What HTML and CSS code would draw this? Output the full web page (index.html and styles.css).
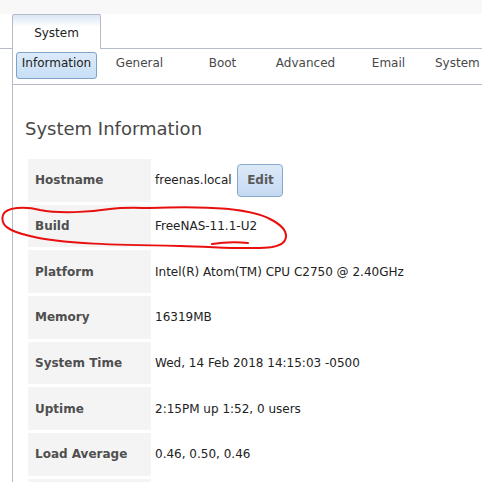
FILE: index.html
```html
<!DOCTYPE html>
<html lang="en">

<head>
    <meta charset="UTF-8">
    <meta name="viewport" content="width=device-width,initial-scale=1" />
    <title>System - Information</title>
    <link rel="stylesheet" href="styles.css">
</head>

<body>
    <div class="topstrip"></div>

    <nav class="tabbar">
        <div class="tab active">System</div>
    </nav>

    <section class="pane">
        <nav class="subtabs">
            <button class="subtab active">Information</button>
            <button class="subtab">General</button>
            <button class="subtab">Boot</button>
            <button class="subtab">Advanced</button>
            <button class="subtab">Email</button>
            <button class="subtab">System Dataset</button>
        </nav>

        <div class="content">
            <h2>System Information</h2>
            <table class="info">
                <tr>
                    <th>Hostname</th>
                    <td>freenas.local <button class="edit-button">Edit</button></td>
                </tr>
                <tr>
                    <th>Build</th>
                    <td>FreeNAS-11.1-U2</td>
                </tr>
                <tr>
                    <th>Platform</th>
                    <td>Intel(R) Atom(TM) CPU C2750 @ 2.40GHz</td>
                </tr>
                <tr>
                    <th>Memory</th>
                    <td>16319MB</td>
                </tr>
                <tr>
                    <th>System Time</th>
                    <td>Wed, 14 Feb 2018 14:15:03 -0500</td>
                </tr>
                <tr>
                    <th>Uptime</th>
                    <td>2:15PM up 1:52, 0 users</td>
                </tr>
                <tr>
                    <th>Load Average</th>
                    <td>0.46, 0.50, 0.46</td>
                </tr>
                <tr>
                    <th>Connected through</th>
                    <td>192.168.1.10</td>
                </tr>
            </table>
        </div>
    </section>

    <!-- hand-drawn red circle around the build row -->
    <svg class="markup" width="482" height="482" viewBox="0 0 482 482">
        <path d="M150 208 C200 206 250 208 270 219 C292 230 290 244 272 247 C250 250 220 247 180 246
                 C120 245 60 244 30 236 C8 231 0 225 3 215 C6 207 25 206 40 210 C60 214 90 212 110 209
                 C125 207 140 208 150 208" />
        <path d="M212 244 C225 242 238 242 248 243" />
    </svg>
</body>

</html>
```

FILE: styles.css
```css
html, body {
    margin: 0;
    overflow: hidden;
    background: white;
    font-family: "DejaVu Sans", sans-serif;
    font-size: 12px;
    color: #222;
}

.topstrip {
    height: 14px;
    background: #f8f8f8;
}

.tabbar {
    display: flex;
    padding-left: 12px;
    height: 34px;
    border-bottom: 1px solid #b5bcc7;
}

.tab {
    width: 89px;
    box-sizing: border-box;
    height: 35px;
    border: 1px solid #b5bcc7;
    border-bottom: none;
    border-radius: 2px 2px 0 0;
    background: linear-gradient(#d9e6f6, #ffffff 35%);
    text-align: center;
    line-height: 36px;
    color: #222;
}

.pane {
    margin-left: 12px;
    border-left: 1px solid #b5bcc7;
    min-height: 500px;
}

.subtabs {
    display: flex;
    gap: 2px;
    padding: 3px 3px 5px;
    border-bottom: 1px solid #b5bcc7;
    white-space: nowrap;
}

.subtab {
    flex: none;
    min-width: 81px;
    height: 27px;
    padding: 0 3px 5px;
    border: 1px solid transparent;
    border-radius: 3px;
    background: none;
    font-family: inherit;
    font-size: 12px;
    color: #484848;
}

.subtab.active {
    border-color: #7ea3c8;
    background: linear-gradient(#dceafa, #c8dff6);
    color: #222;
}

.content {
    padding: 33px 0 0 12px;
}

h2 {
    margin: 0 0 16px;
    font-size: 18px;
    line-height: 22px;
    font-weight: normal;
    color: #484848;
}

.info {
    border-spacing: 3px;
}

.info th {
    width: 116px;
    height: 42.7px;
    padding: 0 0 0 7px;
    background: #f4f4f4;
    text-align: left;
    font-weight: bold;
    color: #4f4f4f;
}

.info td {
    padding: 0 0 0 1px;
    white-space: nowrap;
    color: #222;
}

.edit-button {
    margin-left: 2px;
    height: 33px;
    width: 46px;
    border: 1px solid #86a9cc;
    border-radius: 4px;
    background: linear-gradient(#dde9f8, #c4daf2);
    font-family: inherit;
    font-size: 12px;
    font-weight: bold;
    color: #5a5a5a;
    vertical-align: middle;
}

.markup {
    position: absolute;
    left: 0;
    top: 0;
    pointer-events: none;
}

.markup path {
    fill: none;
    stroke: #e8100f;
    stroke-width: 2;
    stroke-linecap: round;
}
```
